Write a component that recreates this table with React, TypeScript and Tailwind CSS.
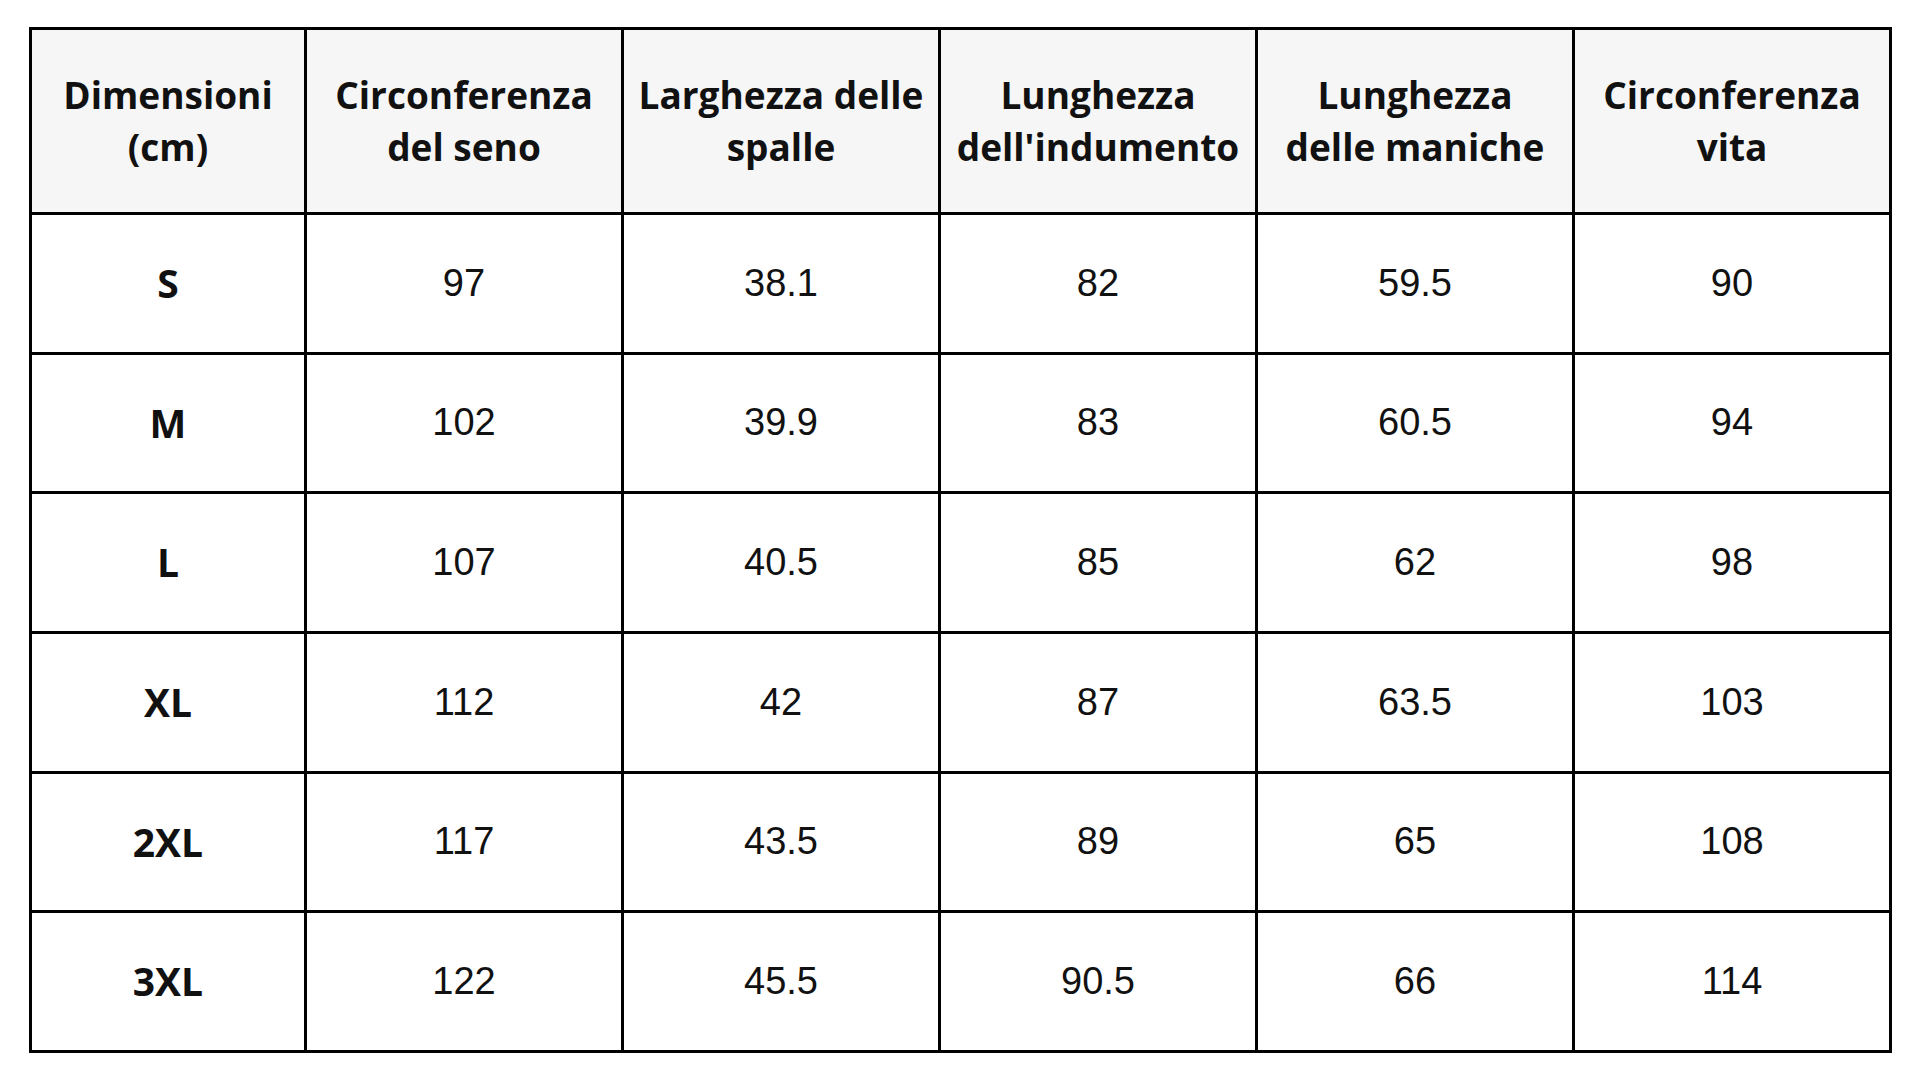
const headers = [
  ["Dimensioni", "(cm)"],
  ["Circonferenza", "del seno"],
  ["Larghezza delle", "spalle"],
  ["Lunghezza", "dell'indumento"],
  ["Lunghezza", "delle maniche"],
  ["Circonferenza", "vita"],
];

const rows: [string, ...string[]][] = [
  ["S", "97", "38.1", "82", "59.5", "90"],
  ["M", "102", "39.9", "83", "60.5", "94"],
  ["L", "107", "40.5", "85", "62", "98"],
  ["XL", "112", "42", "87", "63.5", "103"],
  ["2XL", "117", "43.5", "89", "65", "108"],
  ["3XL", "122", "45.5", "90.5", "66", "114"],
];

export default function App() {
  return (
    <div className="w-[1920px] h-[1080px] bg-white pt-[27px] pl-[29px]">
      <div className="w-[1863px] h-[1026px] border-[3px] border-black bg-black grid grid-cols-[272px_repeat(5,1fr)] grid-rows-[182px_repeat(6,1fr)] gap-[3px]">
        {headers.map((h, i) => (
          <div
            key={i}
            className="bg-[#f6f6f6] flex flex-col items-center justify-center text-center text-[37px] leading-[52px] font-bold text-[#111] font-['Open_Sans',sans-serif]"
          >
            <span>{h[0]}</span>
            <span>{h[1]}</span>
          </div>
        ))}
        {rows.map((r) =>
          r.map((v, j) => (
            <div
              key={r[0] + j}
              className={
                j === 0
                  ? "bg-white flex items-center justify-center text-[39px] font-bold text-[#111] font-['Open_Sans',sans-serif]"
                  : "bg-white flex items-center justify-center text-[38px] text-[#111] font-['Liberation_Sans',Arial,sans-serif]"
              }
            >
              {v}
            </div>
          ))
        )}
      </div>
    </div>
  );
}
